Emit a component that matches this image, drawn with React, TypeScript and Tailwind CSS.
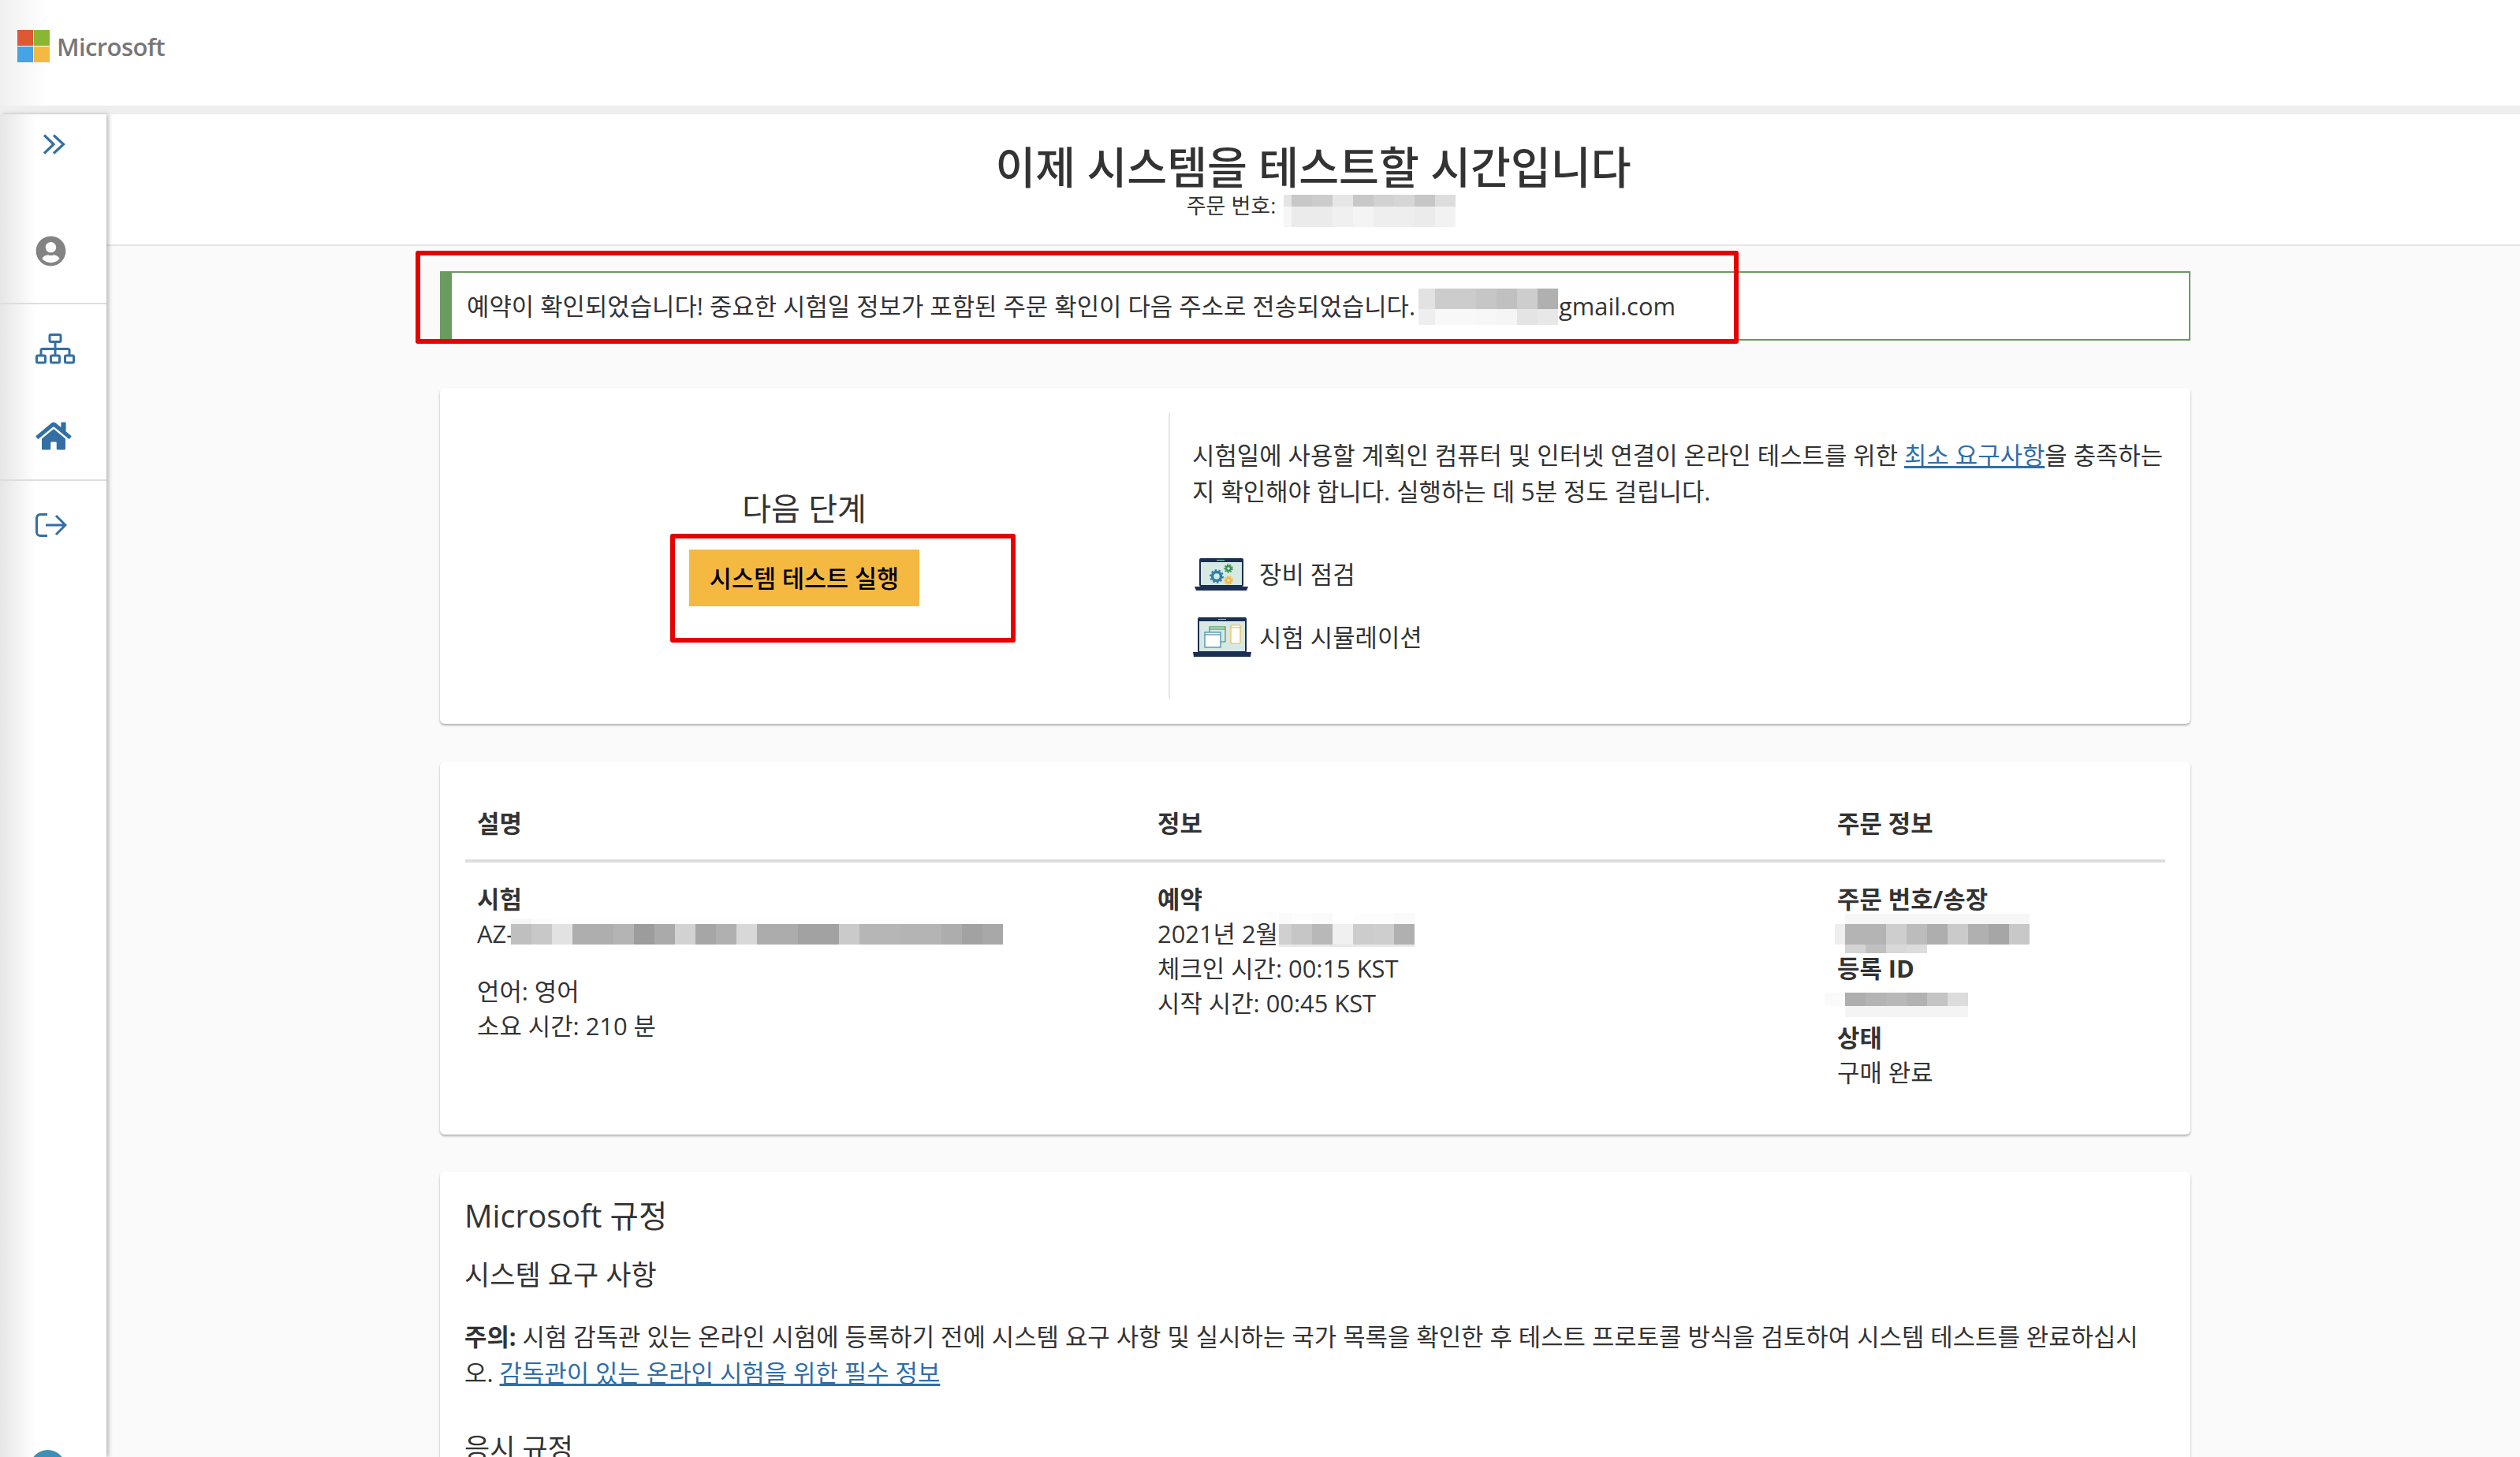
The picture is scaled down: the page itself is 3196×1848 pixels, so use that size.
import { FaHome, FaUserCircle } from "react-icons/fa";

const RedBox = ({ className }: { className: string }) => (
  <div className={`pointer-events-none absolute z-20 rounded-[3px] border-[6px] border-[#e60000] ${className}`} />
);

// pixelated blur cover, one row of class names per band
const Redact = ({ rows, className }: { rows: [string, string[]][]; className: string }) => (
  <span className={`absolute flex flex-col ${className}`}>
    {rows.map(([height, cells], i) => (
      <span key={i} className={`flex ${height}`}>
        {cells.map((cell, j) => (
          <span key={j} className={`shrink-0 ${cell}`} />
        ))}
      </span>
    ))}
  </span>
);

const LaptopGears = () => (
  <svg viewBox="0 0 68 41" className="h-[41px] w-[68px] shrink-0">
    <rect x="6" y="0" width="56" height="36" rx="2" fill="#1b2f52" />
    <rect x="8" y="5" width="52" height="29" fill="#d6e9e4" />
    <rect x="28" y="2" width="10" height="1" fill="#99ddbb" />
    <path d="M0 36h68l-2 5H2z" fill="#1b2f52" />
    <circle cx="28" cy="23" r="5.500" fill="none" stroke="#2f7fa8" strokeWidth="3.500" />
    <circle cx="28" cy="23" r="8" fill="none" stroke="#2f7fa8" strokeWidth="1.800" strokeDasharray="2.500 2.500" />
    <circle cx="43" cy="13" r="3" fill="none" stroke="#3f8f4f" strokeWidth="2.500" />
    <circle cx="43" cy="13" r="5" fill="none" stroke="#3f8f4f" strokeWidth="1.500" strokeDasharray="2 1.500" />
    <circle cx="43" cy="28" r="3" fill="none" stroke="#f5b942" strokeWidth="2.500" />
    <circle cx="43" cy="28" r="5" fill="none" stroke="#f5b942" strokeWidth="1.500" strokeDasharray="2 1.500" />
  </svg>
);

const LaptopWindows = () => (
  <svg viewBox="0 0 74 50" className="h-[50px] w-[74px] shrink-0">
    <rect x="6" y="0" width="62" height="45" rx="2" fill="#1b2f52" />
    <rect x="8" y="5" width="58" height="38" fill="#d6e9e4" />
    <rect x="32" y="2" width="10" height="1" fill="#99ddbb" />
    <path d="M0 44h74l-1 6H1z" fill="#1b2f52" />
    <rect x="21" y="12" width="20" height="19" fill="#d6e9e4" stroke="#4a9a5a" strokeWidth="1.2" />
    <path d="M21 15h20" stroke="#4a9a5a" strokeWidth="1.2" />
    <rect x="15" y="19" width="20" height="19" fill="#fff" stroke="#3f86a8" strokeWidth="1.2" />
    <path d="M15 22h20" stroke="#3f86a8" strokeWidth="1.2" />
    <rect x="48" y="10" width="12" height="23" rx="1" fill="#fff" stroke="#f5b942" strokeWidth="1.2" />
    <path d="M48 13h12" stroke="#f5b942" strokeWidth="1.2" />
  </svg>
);

const Chevrons = () => (
  <svg viewBox="0 0 28 26" className="h-[26px] w-[28px]" fill="none" stroke="#336fa6" strokeWidth="3.2">
    <path d="M1 1.5 13 13 1 24.5" />
    <path d="M13 1.5 25.5 13 13 24.5" />
  </svg>
);

const SitemapIcon = () => (
  <svg viewBox="0 0 50 39" className="h-[39px] w-[50px]" fill="none" stroke="#336fa6" strokeWidth="3">
    <rect x="18" y="1.5" width="14" height="9" rx="1.5" />
    <path d="M25 10.5V27M7 27v-5.5a2 2 0 0 1 2-2h32a2 2 0 0 1 2 2V27" />
    <rect x="1.5" y="28" width="11" height="9" rx="1.5" />
    <rect x="19.5" y="28" width="11" height="9" rx="1.5" />
    <rect x="37.5" y="28" width="11" height="9" rx="1.5" />
  </svg>
);

const ExitIcon = () => (
  <svg viewBox="0 0 40 30" className="h-[30px] w-[40px]" fill="none" stroke="#336fa6" strokeWidth="3">
    <path d="M15 1.5H6A4.500 4.500 0 0 0 1.500 6v18A4.500 4.500 0 0 0 6 28.500h9" />
    <path d="M13 15h25M26 3l12 12-12 12" />
  </svg>
);

const Sidebar = () => (
  <aside className="relative z-10 flex h-[1703px] w-[135px] shrink-0 flex-col bg-gradient-to-r from-[#e6e6e6] to-white to-[45px] shadow-[3px_0_5px_rgba(0,0,0,0.25)]">
    <div className="h-[241px] border-b-2 border-[#dddddd] pl-[45px]">
      <div className="mt-[25px] ml-[10px]">
        <Chevrons />
      </div>
      <FaUserCircle className="mt-[103px] size-[39px] text-[#838383]" />
    </div>
    <div className="h-[224px] border-b-2 border-[#dddddd] pl-[45px]">
      <div className="mt-[37px]">
        <SitemapIcon />
      </div>
      <FaHome className="mt-[71px] h-[40px] w-[46px] text-[#336fa6]" />
    </div>
    <div className="relative flex-1 pl-[45px]">
      <div className="mt-[41px]">
        <ExitIcon />
      </div>
      <div className="absolute top-[1229px] left-[38px] size-[45px] rounded-full bg-[#3d8fb5]" />
    </div>
  </aside>
);

const Label = ({ children }: { children: string }) => <div className="font-bold">{children}</div>;

export default function App() {
  return (
    <div
      className="relative h-[1848px] w-[3196px] overflow-hidden bg-[#fafafa] text-[30.85px] leading-[44px] text-[#333333]"
      style={{ fontFamily: '"Open Sans", "Noto Sans CJK KR", sans-serif' }}
    >
      <header className="h-[145px] border-b-[11px] border-[#eeeeee] bg-gradient-to-r from-[#f0f0f0] to-white to-[60px]">
        <div className="flex items-center gap-[9px] pt-[38px] pl-[22px]">
          <div className="grid w-[41px] grid-cols-2 gap-[1px]">
            <div className="h-[20px] bg-[#de5833]" />
            <div className="h-[20px] bg-[#8ab733]" />
            <div className="h-[20px] bg-[#45a3e6]" />
            <div className="h-[20px] bg-[#f5b942]" />
          </div>
          <span className="text-[31px] leading-[40px] font-semibold tracking-[-0.6px] text-[#777777]">Microsoft</span>
        </div>
      </header>

      <div className="flex">
        <Sidebar />
        <main className="min-w-0 flex-1">
          <div className="h-[167px] border-b-2 border-[#e5e5e5] bg-white pt-[32px] text-center">
            <h1 className="text-[55.3px] leading-[70px] font-medium">이제 시스템을 테스트할 시간입니다</h1>
            <div className="relative pr-[208px] text-[27px] leading-[28px]">
              주문 번호:
              <Redact
                className="top-[0px] left-[1493px]"
                rows={[
                  ["h-[15px]", ["w-[10px] bg-[#e5e5e5]", "w-[26px] bg-[#c8c8c8]", "w-[26px] bg-[#cccccc]", "w-[26px] bg-[#e6e6e6]", "w-[26px] bg-[#c8c8c8]", "w-[26px] bg-[#d2d2d2]", "w-[26px] bg-[#d6d6d6]", "w-[26px] bg-[#c6c6c6]", "w-[26px] bg-[#dddddd]"]],
                  ["h-[26px]", ["w-[10px] bg-[#f6f6f6]", "w-[26px] bg-[#ebebeb]", "w-[26px] bg-[#ebebeb]", "w-[26px] bg-[#f0f0f0]", "w-[26px] bg-[#f4f4f4]", "w-[26px] bg-[#eeeeee]", "w-[26px] bg-[#eeeeee]", "w-[26px] bg-[#ebebeb]", "w-[26px] bg-[#f2f2f2]"]],
                ]}
              />
            </div>
          </div>

          <div className="ml-[423px] w-[2220px]">
            <div className="relative mt-[32px] flex h-[88px] items-center border-2 border-l-[15px] border-[#6a9b5e] bg-white pl-[19px]">
              <span>예약이 확인되었습니다! 중요한 시험일 정보가 포함된 주문 확인이 다음 주소로 전송되었습니다.</span>
              <span className="absolute left-[1404px]">gmail.com</span>
              <Redact
                className="top-[20px] left-[1226px]"
                rows={[
                  ["h-[26px]", ["w-[21px] bg-[#e2e2e2]", "w-[52px] bg-[#cccccc]", "w-[26px] bg-[#c6c6c6]", "w-[26px] bg-[#c0c0c0]", "w-[26px] bg-[#cdcdcd]", "w-[26px] bg-[#b0b0b0]"]],
                  ["h-[20px]", ["w-[21px] bg-[#eeeeee]", "w-[52px] bg-[#f8f8f8]", "w-[26px] bg-[#f7f7f7]", "w-[26px] bg-[#f5f5f5]", "w-[26px] bg-[#e4e4e4]", "w-[26px] bg-[#e8e8e8]"]],
                ]}
              />
            </div>

            <section className="mt-[60px] flex h-[426px] rounded-[6px] bg-white shadow-[0_2px_3px_rgba(0,0,0,0.3)]">
              <div className="flex w-[924px] flex-col items-center pt-[127px]">
                <h2 className="text-[40px] leading-[52px]">다음 단계</h2>
                <button className="mt-[26px] h-[72px] w-[292px] bg-[#f5b942] text-[30.5px] font-medium text-black">시스템 테스트 실행</button>
              </div>
              <div className="my-[32px] border-l-2 border-[#e5e5e5] pl-[28px]">
                <p className="mt-[30px] w-[1250px] leading-[46px]">
                  시험일에 사용할 계획인 컴퓨터 및 인터넷 연결이 온라인 테스트를 위한{" "}
                  <a className="text-[#2f6ea8] underline">최소 요구사항</a>을 충족하는지 확인해야 합니다. 실행하는 데 5분 정도 걸립니다.
                </p>
                <div className="mt-[60px] flex items-center gap-[14px] pl-[3px]">
                  <LaptopGears />
                  <span>장비 점검</span>
                </div>
                <div className="mt-[33px] flex items-center gap-[10px] pl-[1px]">
                  <LaptopWindows />
                  <span>시험 시뮬레이션</span>
                </div>
              </div>
            </section>

            <section className="mt-[48px] h-[473px] rounded-[6px] bg-white px-[32px] pt-[56px] shadow-[0_2px_3px_rgba(0,0,0,0.3)]">
              <div className="grid h-[72px] grid-cols-[863px_862px_1fr] border-b-4 border-[#dddddd] px-[15px] font-bold">
                <div>설명</div>
                <div>정보</div>
                <div>주문 정보</div>
              </div>
              <div className="grid grid-cols-[863px_862px_1fr] px-[15px] pt-[24px]">
                <div className="relative">
                  <Label>시험</Label>
                  <div>AZ-</div>
                  <Redact
                    className="top-[47px] left-[43px]"
                    rows={[
                      ["h-[7px]", ["w-[26px] bg-[#f6f6f6]", "w-[26px] bg-[#fbfbfb]", "w-[574px] bg-[#fdfdfd]"]],
                      ["h-[26px]", ["w-[26px] bg-[#bfbfbf]", "w-[26px] bg-[#c8c8c8]", "w-[26px] bg-[#e2e2e2]", "w-[52px] bg-[#aeaeae]", "w-[26px] bg-[#b4b4b4]", "w-[26px] bg-[#9c9c9c]", "w-[26px] bg-[#aaaaaa]", "w-[26px] bg-[#d2d2d2]", "w-[26px] bg-[#a6a6a6]", "w-[26px] bg-[#b0b0b0]", "w-[26px] bg-[#d8d8d8]", "w-[52px] bg-[#acacac]", "w-[52px] bg-[#a2a2a2]", "w-[26px] bg-[#cacaca]", "w-[52px] bg-[#b6b6b6]", "w-[52px] bg-[#b4b4b4]", "w-[26px] bg-[#adadad]", "w-[26px] bg-[#a2a2a2]", "w-[26px] bg-[#a8a8a8]"]],
                    ]}
                  />
                  <div className="mt-[29px]">언어: 영어</div>
                  <div>소요 시간: 210 분</div>
                </div>
                <div className="relative">
                  <Label>예약</Label>
                  <div>2021년 2월</div>
                  <Redact
                    className="top-[40px] left-[154px]"
                    rows={[
                      ["h-[14px]", ["w-[16px] bg-[#fafafa]", "w-[26px] bg-[#fdfdfd]", "w-[26px] bg-[#fafafa]", "w-[26px] bg-white", "w-[26px] bg-[#fdfdfd]", "w-[26px] bg-[#fdfdfd]", "w-[26px] bg-[#fafafa]"]],
                      ["h-[26px]", ["w-[16px] bg-[#d0d0d0]", "w-[26px] bg-[#c6c6c6]", "w-[26px] bg-[#b8b8b8]", "w-[26px] bg-[#f0f0f0]", "w-[26px] bg-[#cccccc]", "w-[26px] bg-[#cecece]", "w-[26px] bg-[#b0b0b0]"]],
                      ["h-[3px]", ["w-[172px] bg-[#e8e8e8]"]],
                    ]}
                  />
                  <div>체크인 시간: 00:15 KST</div>
                  <div>시작 시간: 00:45 KST</div>
                </div>
                <div className="relative">
                  <Label>주문 번호/송장</Label>
                  <Redact
                    className="top-[41px] left-[-3px]"
                    rows={[
                      ["h-[13px]", ["w-[13px] bg-white", "w-[234px] bg-[#f6f6f6]"]],
                      ["h-[26px]", ["w-[13px] bg-[#eeeeee]", "w-[52px] bg-[#b4b4b4]", "w-[26px] bg-[#cecece]", "w-[26px] bg-[#bcbcbc]", "w-[26px] bg-[#aeaeae]", "w-[26px] bg-[#cacaca]", "w-[26px] bg-[#b0b0b0]", "w-[26px] bg-[#a6a6a6]", "w-[26px] bg-[#c8c8c8]"]],
                      ["h-[11px]", ["w-[13px] bg-white", "w-[26px] bg-[#d4d4d4]", "w-[26px] bg-[#c0c0c0]", "w-[26px] bg-[#d8d8d8]", "w-[26px] bg-[#dcdcdc]"]],
                    ]}
                  />
                  <div className="h-[44px]" />
                  <Label>등록 ID</Label>
                  <Redact
                    className="top-[141px] left-[-16px]"
                    rows={[
                      ["h-[17px]", ["w-[26px] bg-[#fafafa]", "w-[26px] bg-[#aeaeae]", "w-[26px] bg-[#b4b4b4]", "w-[26px] bg-[#b8b8b8]", "w-[26px] bg-[#b2b2b2]", "w-[26px] bg-[#c4c4c4]", "w-[26px] bg-[#dcdcdc]"]],
                      ["h-[14px]", ["w-[26px] bg-white", "w-[156px] bg-[#f4f4f4]"]],
                    ]}
                  />
                  <div className="h-[44px]" />
                  <Label>상태</Label>
                  <div>구매 완료</div>
                </div>
              </div>
            </section>

            <section className="mt-[47px] h-[500px] rounded-[6px] bg-white pt-[30px] pr-[32px] pl-[31px] shadow-[0_2px_3px_rgba(0,0,0,0.3)]">
              <h2 className="text-[39.5px] leading-[52px]">Microsoft 규정</h2>
              <h3 className="mt-[27px] text-[35px] leading-[44px]">시스템 요구 사항</h3>
              <p className="mt-[33px] w-[2140px] leading-[46px]">
                <strong>주의:</strong> 시험 감독관 있는 온라인 시험에 등록하기 전에 시스템 요구 사항 및 실시하는 국가 목록을 확인한 후 테스트 프로토콜 방식을 검토하여 시스템 테스트를 완료하십시오.{" "}
                <a className="text-[#2f6ea8] underline">감독관이 있는 온라인 시험을 위한 필수 정보</a>
              </p>
              <h3 className="mt-[51px] text-[35px] leading-[44px]">응시 규정</h3>
            </section>
          </div>
        </main>
      </div>

      <RedBox className="top-[318px] left-[527px] h-[118px] w-[1678px]" />
      <RedBox className="top-[677px] left-[850px] h-[138px] w-[438px]" />
    </div>
  );
}
